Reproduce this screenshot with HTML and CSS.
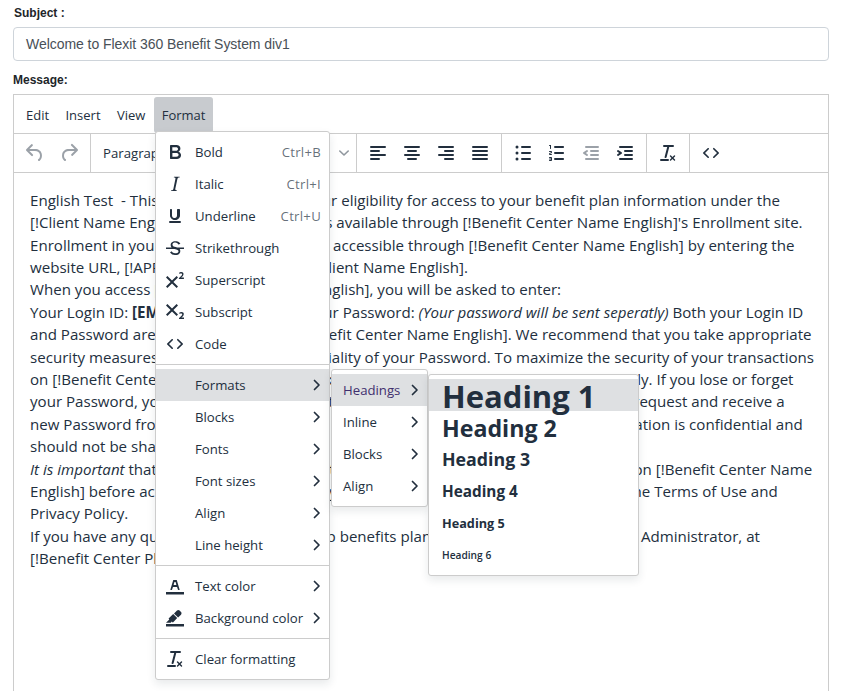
FILE: index.html
```html
<!DOCTYPE html>
<html lang="en">
<head>
<meta charset="utf-8">
<title>Message editor</title>
<link rel="stylesheet" href="styles.css">
</head>
<body>
<svg class="sprite" xmlns="http://www.w3.org/2000/svg">
  <symbol id="i-undo" viewBox="0 0 24 24"><path d="M6.4 8H12c3.7 0 6.2 2 6.8 5.1.6 2.7-.4 5.6-2.3 6.8a1 1 0 0 1-1-1.8c1.1-.6 1.8-2.7 1.4-4.6-.5-2.1-2.1-3.5-4.9-3.5H6.4l3.3 3.3a1 1 0 1 1-1.4 1.4l-5-5a1 1 0 0 1 0-1.4l5-5a1 1 0 0 1 1.4 1.4L6.4 8z"/></symbol>
  <symbol id="i-redo" viewBox="0 0 24 24"><path d="M17.6 10H12c-2.8 0-4.4 1.4-4.9 3.5-.4 2 .3 4 1.4 4.6a1 1 0 1 1-1 1.8c-2-1.2-2.9-4.1-2.3-6.8.6-3 3-5.1 6.8-5.1h5.6l-3.3-3.3a1 1 0 1 1 1.4-1.4l5 5a1 1 0 0 1 0 1.4l-5 5a1 1 0 0 1-1.4-1.4l3.3-3.3z"/></symbol>
  <symbol id="i-left" viewBox="0 0 24 24"><path d="M5 5h14a1 1 0 0 1 0 2H5a1 1 0 1 1 0-2zm0 4h8a1 1 0 0 1 0 2H5a1 1 0 0 1 0-2zm0 8h8a1 1 0 0 1 0 2H5a1 1 0 0 1 0-2zm0-4h14a1 1 0 0 1 0 2H5a1 1 0 0 1 0-2z"/></symbol>
  <symbol id="i-center" viewBox="0 0 24 24"><path d="M5 5h14a1 1 0 0 1 0 2H5a1 1 0 1 1 0-2zm3 4h8a1 1 0 0 1 0 2H8a1 1 0 1 1 0-2zm0 8h8a1 1 0 0 1 0 2H8a1 1 0 0 1 0-2zm-3-4h14a1 1 0 0 1 0 2H5a1 1 0 0 1 0-2z"/></symbol>
  <symbol id="i-right" viewBox="0 0 24 24"><path d="M5 5h14a1 1 0 0 1 0 2H5a1 1 0 1 1 0-2zm6 4h8a1 1 0 0 1 0 2h-8a1 1 0 0 1 0-2zm0 8h8a1 1 0 0 1 0 2h-8a1 1 0 0 1 0-2zm-6-4h14a1 1 0 0 1 0 2H5a1 1 0 0 1 0-2z"/></symbol>
  <symbol id="i-justify" viewBox="0 0 24 24"><path d="M5 5h14a1 1 0 0 1 0 2H5a1 1 0 1 1 0-2zm0 4h14a1 1 0 0 1 0 2H5a1 1 0 1 1 0-2zm0 4h14a1 1 0 0 1 0 2H5a1 1 0 0 1 0-2zm0 4h14a1 1 0 0 1 0 2H5a1 1 0 0 1 0-2z"/></symbol>
  <symbol id="i-bul" viewBox="0 0 24 24"><path d="M11 5h8a1 1 0 0 1 0 2h-8a1 1 0 0 1 0-2zm0 6h8a1 1 0 0 1 0 2h-8a1 1 0 0 1 0-2zm0 6h8a1 1 0 0 1 0 2h-8a1 1 0 0 1 0-2zM4.5 6a1.5 1.5 0 1 1 3 0 1.5 1.5 0 0 1-3 0zm0 6a1.5 1.5 0 1 1 3 0 1.5 1.5 0 0 1-3 0zm0 6a1.5 1.5 0 1 1 3 0 1.5 1.5 0 0 1-3 0z"/></symbol>
  <symbol id="i-num" viewBox="0 0 24 24"><path d="M10 17h8c.6 0 1 .4 1 1s-.4 1-1 1h-8a1 1 0 0 1 0-2zm0-6h8c.6 0 1 .4 1 1s-.4 1-1 1h-8a1 1 0 0 1 0-2zm0-6h8c.6 0 1 .4 1 1s-.4 1-1 1h-8a1 1 0 1 1 0-2zM6 4v3.5c0 .3-.2.5-.5.5a.5.5 0 0 1-.5-.5V5h-.5a.5.5 0 0 1 0-1H6zm-1 8.8l.2.2h1.3c.3 0 .5.2.5.5s-.2.5-.5.5H4.900a1 1 0 0 1-.9-1V13c0-.4.3-.8.6-1l1.200-.4.2-.3a.2.2 0 0 0-.2-.2H4.500a.5.5 0 0 1-.5-.5c0-.3.2-.5.5-.5h1.600c.5 0 .9.4.9 1v.1c0 .4-.3.8-.6 1l-1.200.4-.2.3zM7 17v2c0 .6-.4 1-1 1H4.500a.5.5 0 0 1 0-1h1.200c.2 0 .3-.1.3-.3 0-.2-.1-.3-.3-.3H4.400a.4.4 0 1 1 0-.8h1.300c.2 0 .3-.1.3-.3 0-.2-.1-.3-.3-.3H4.500a.5.5 0 1 1 0-1H6c.6 0 1 .4 1 1z"/></symbol>
  <symbol id="i-outdent" viewBox="0 0 24 24"><path d="M7 5h12a1 1 0 0 1 0 2H7a1 1 0 1 1 0-2zm5 4h7a1 1 0 0 1 0 2h-7a1 1 0 0 1 0-2zm0 4h7a1 1 0 0 1 0 2h-7a1 1 0 0 1 0-2zm-5 4h12a1 1 0 0 1 0 2H7a1 1 0 0 1 0-2zm1.600-3.800a1 1 0 0 1-1.200 1.600l-3-2a1 1 0 0 1 0-1.600l3-2a1 1 0 0 1 1.200 1.600L6.800 12l1.800 1.200z"/></symbol>
  <symbol id="i-indent" viewBox="0 0 24 24"><path d="M7 5h12a1 1 0 0 1 0 2H7a1 1 0 1 1 0-2zm5 4h7a1 1 0 0 1 0 2h-7a1 1 0 0 1 0-2zm0 4h7a1 1 0 0 1 0 2h-7a1 1 0 0 1 0-2zm-5 4h12a1 1 0 0 1 0 2H7a1 1 0 0 1 0-2zm-2.600-3.800L6.200 12l-1.800-1.200a1 1 0 0 1 1.200-1.600l3 2a1 1 0 0 1 0 1.600l-3 2a1 1 0 1 1-1.200-1.600z"/></symbol>
  <symbol id="i-clear" viewBox="0 0 24 24"><path d="M13.200 6a1 1 0 0 1 0 .2l-2.600 10a1 1 0 0 1-1 .8h-.2a.8.8 0 0 1-.8-1l2.600-10H8a1 1 0 1 1 0-2h9a1 1 0 0 1 0 2h-3.800zM5 18h7a1 1 0 0 1 0 2H5a1 1 0 0 1 0-2zm13 1.500L16.500 18 15 19.500a.7.7 0 0 1-1-1l1.500-1.500-1.500-1.500a.7.7 0 0 1 1-1l1.500 1.500 1.500-1.500a.7.7 0 0 1 1 1L17.500 17l1.500 1.500a.7.7 0 0 1-1 1z"/></symbol>
  <symbol id="i-code" viewBox="0 0 24 24"><path d="M9.800 15.700c.3.3.3.8 0 1-.3.4-.9.4-1.200 0l-4.400-4.100a.8.8 0 0 1 0-1.200l4.400-4.200c.3-.3.9-.3 1.200 0 .3.3.3.8 0 1.100L6 12l3.800 3.700zM14.200 15.700c-.3.3-.3.8 0 1 .4.4.9.4 1.200 0l4.400-4.100c.3-.3.3-.9 0-1.200l-4.400-4.200a.8.8 0 0 0-1.200 0c-.3.3-.3.8 0 1.100L18 12l-3.800 3.700z"/></symbol>
  <symbol id="i-bold" viewBox="0 0 24 24"><path d="M7.800 19c-.3 0-.5 0-.6-.2l-.2-.5V5.700c0-.2 0-.4.2-.5l.6-.2h5c1.500 0 2.700.3 3.500 1 .7.6 1.100 1.400 1.100 2.500a3 3 0 0 1-.6 1.900c-.4.6-1 1-1.600 1.200.4.1.9.3 1.300.6s.8.7 1 1.200c.4.4.5 1 .5 1.600 0 1.300-.4 2.300-1.300 3-.8.7-2.100 1-3.800 1H7.800zm5-8.300c.6 0 1.200-.1 1.600-.5.4-.3.6-.7.6-1.300 0-1.100-.8-1.700-2.300-1.700H9.300v3.500h3.500zm.5 6c.7 0 1.300-.1 1.700-.4.4-.4.6-.9.6-1.500s-.2-1-.7-1.400c-.4-.3-1-.4-2-.4H9.400v3.800h3.900z"/></symbol>
  <symbol id="i-italic" viewBox="0 0 24 24"><path d="M16.700 4.700l-.1.9h-.3c-.6 0-1 0-1.400.3-.3.3-.4.6-.5 1.100l-2.100 9.800v.6c0 .5.4.8 1.400.8h.2l-.2.8H8l.2-.8h.2c1.100 0 1.800-.5 2-1.500l2-9.800.1-.5c0-.6-.4-.8-1.400-.8h-.3l.2-.9h5.800z"/></symbol>
  <symbol id="i-underline" viewBox="0 0 24 24"><path d="M16 5c.6 0 1 .4 1 1v5.500a4 4 0 0 1-.4 1.800l-.2.3a4 4 0 0 1-3 2.400h-2.800a4 4 0 0 1-3-2.400l-.2-.3a4 4 0 0 1-.4-1.800V6c0-.6.4-1 1-1s1 .4 1 1v5.500c0 .3 0 .6.2.9a2.400 2.400 0 0 0 2.800 1.600c1.100-.2 2-1.200 2-2.500V6c0-.6.4-1 1-1zM7 17h10a1 1 0 0 1 0 2H7a1 1 0 0 1 0-2z"/></symbol>
  <symbol id="i-strike" viewBox="0 0 24 24"><path d="M15.600 8.500c-.5-.7-1-1.100-1.300-1.300-.6-.4-1.300-.6-2-.6-2.700 0-2.800 1.700-2.800 2.100 0 1.600 1.800 2 3.200 2.300 4.400.9 4.600 2.800 4.600 3.900 0 1.400-.7 4.100-5 4.100A6.200 6.200 0 0 1 7 16.400l1.500-1.100c.4.6 1.600 2 3.700 2 1.600 0 2.500-.4 3-1 .3-.4.3-.7.3-1 0-.8-.5-1.500-3-2-2.500-.6-4.800-1.200-4.800-4.200 0-1.300.4-3.900 4.800-3.900 1.600 0 2.700.5 3.200.8.5.3 1.300 1 1.700 1.500l-1.800 1.200zM3 11.500h18v1.500H3z"/></symbol>
  <symbol id="i-sup" viewBox="0 0 24 24"><path d="M15 9.400L10.400 14l4.600 4.600-1.400 1.400L9 15.400 4.400 20 3 18.600 7.600 14 3 9.400 4.400 8 9 12.600 13.600 8 15 9.400zm5.900 1.600h-5v-1l1-.8 1.700-1.600c.3-.4.5-.8.5-1.200 0-.3 0-.5-.2-.7-.2-.2-.5-.3-.9-.3l-.8.2-.7.4-.4-1.200c.2-.2.5-.4 1-.5.3-.2.8-.2 1.200-.2.7 0 1.200.2 1.600.5.4.4.6.9.6 1.500s-.2 1.100-.5 1.600a8 8 0 0 1-1.300 1.300l-.6.6h2.800V11z"/></symbol>
  <symbol id="i-sub" viewBox="0 0 24 24"><path d="M10.400 10l4.600 4.600-1.400 1.400L9 11.400 4.400 16 3 14.600 7.600 10 3 5.400 4.400 4 9 8.600 13.600 4 15 5.400 10.400 10zM21 19h-5v-1l1-.8 1.700-1.600c.3-.4.5-.8.5-1.200 0-.3 0-.6-.2-.7-.2-.2-.5-.3-.9-.3a2 2 0 0 0-.8.2l-.7.3-.4-1.100 1-.6 1.200-.2c.8 0 1.400.2 1.800.6.4.4.6.9.6 1.500s-.2 1.100-.5 1.600a8 8 0 0 1-1.300 1.300l-.6.6h2.600V19z"/></symbol>
  <symbol id="i-color" viewBox="0 0 24 24"><path d="M3 18h18v2.500H3z"/><path d="M8.700 16h-.8a.5.5 0 0 1-.5-.6l2.700-9c.1-.3.3-.4.5-.4h2.800c.2 0 .4.1.5.4l2.700 9a.5.5 0 0 1-.5.6h-.8a.5.5 0 0 1-.4-.4l-.7-2.200c0-.3-.3-.4-.5-.4h-3.400c-.2 0-.4.1-.5.4l-.7 2.200c0 .3-.2.4-.4.4zm2.600-7.600l-.6 2a.5.5 0 0 0 .5.6h1.600a.5.5 0 0 0 .5-.6l-.6-2c0-.3-.3-.4-.5-.4h-.4c-.2 0-.4.1-.5.4z"/></symbol>
  <symbol id="i-bg" viewBox="0 0 24 24"><path d="M3 18h18v2.500H3z"/><path d="M7.700 16.700H3l3.300-3.300-.7-.8L10.200 8l4 4.100-4 4.200c-.2.2-.6.2-.8 0l-.6-.7-1.100 1.100zm5-7.500L11 7.400l3-2.900a2 2 0 0 1 2.600 0L18 6c.7.7.7 2 0 2.700l-2.900 2.900-1.800-1.800-.5-.6z"/></symbol>
  <symbol id="i-chev" viewBox="0 0 16 16"><path d="M5.500 3.500l4.500 4.500-4.500 4.500" fill="none" stroke="currentColor" stroke-width="1.700" stroke-linecap="round" stroke-linejoin="round"/></symbol>
  <symbol id="i-down" viewBox="0 0 10 10"><path d="M.8 3l4.200 4 4.200-4" fill="none" stroke="currentColor" stroke-width="1.600" stroke-linecap="round" stroke-linejoin="round"/></symbol>
</svg>

<main class="page">
  <label class="field-label subject-label">Subject :</label>
  <div class="subject-input">Welcome to Flexit 360 Benefit System div1</div>
  <label class="field-label message-label">Message:</label>

  <section class="editor">
    <nav class="menubar">
      <span class="menu-btn">Edit</span>
      <span class="menu-btn">Insert</span>
      <span class="menu-btn">View</span>
      <span class="menu-btn is-open">Format</span>
    </nav>
    <div class="toolbar">
      <div class="tb-group">
        <span class="tb-btn is-off"><svg class="ic"><use href="#i-undo"/></svg></span>
        <span class="tb-btn is-off"><svg class="ic"><use href="#i-redo"/></svg></span>
      </div>
      <div class="tb-group tb-select">
        <span class="select-label">Paragraph</span>
        <svg class="select-chev"><use href="#i-down"/></svg>
      </div>
      <div class="tb-group">
        <span class="tb-btn"><svg class="ic"><use href="#i-left"/></svg></span>
        <span class="tb-btn"><svg class="ic"><use href="#i-center"/></svg></span>
        <span class="tb-btn"><svg class="ic"><use href="#i-right"/></svg></span>
        <span class="tb-btn"><svg class="ic"><use href="#i-justify"/></svg></span>
      </div>
      <div class="tb-group">
        <span class="tb-btn"><svg class="ic"><use href="#i-bul"/></svg></span>
        <span class="tb-btn"><svg class="ic"><use href="#i-num"/></svg></span>
        <span class="tb-btn is-off"><svg class="ic"><use href="#i-outdent"/></svg></span>
        <span class="tb-btn"><svg class="ic"><use href="#i-indent"/></svg></span>
      </div>
      <div class="tb-group">
        <span class="tb-btn"><svg class="ic"><use href="#i-clear"/></svg></span>
      </div>
      <div class="tb-group tb-last">
        <span class="tb-btn"><svg class="ic"><use href="#i-code"/></svg></span>
      </div>
    </div>
    <div class="content">
      English Test&nbsp; - This notice is to&nbsp; confirm your eligibility for access to your benefit plan information under the<br>
      [!Client Name English] benefit plan which is available through [!Benefit Center Name English]'s Enrollment site.<br>
      Enrollment in your benefits plan website is accessible through [!Benefit Center Name English] by entering the<br>
      website URL, [!APPLICATION URL], plus&nbsp; [!Client Name English].<br>
      When you access [!Benefit Center Name English], you will be asked to enter:<br>
      Your Login ID: <strong>[EMPLOYEE ID]</strong> and add your Password: <em>(Your password will be sent seperatly)</em> Both your Login ID<br>
      and Password are required to access [!Benefit Center Name English]. We recommend that you take appropriate<br>
      security measures to defend the confidentiality of your Password. To maximize the security of your transactions<br>
      on [!Benefit Center Name English], please keep your Password secure and use it secretly. If you lose or forget<br>
      your Password, you can contact the Benefit Center at any time in order to send a new request and receive a<br>
      new Password from the site. Your Login ID and Password are personal and this information is confidential and<br>
      should not be shared with anyone.<br>
      <em>It is important</em> that you do read and understand all of the plan details and information on [!Benefit Center Name<br>
      English] before accessing the site and that you have carefully read and agree to all of the Terms of Use and<br>
      Privacy Policy.<br>
      If you have any questions about your group benefits plan, please do&nbsp; contact your Plan Administrator, at<br>
      [!Benefit Center Phone].
    </div>
  </section>
</main>

<div class="menu menu-format">
  <div class="menu-group">
    <div class="item"><svg class="ic"><use href="#i-bold"/></svg><span class="item-text">Bold</span><span class="shortcut">Ctrl+B</span></div>
    <div class="item"><svg class="ic"><use href="#i-italic"/></svg><span class="item-text">Italic</span><span class="shortcut">Ctrl+I</span></div>
    <div class="item"><svg class="ic"><use href="#i-underline"/></svg><span class="item-text">Underline</span><span class="shortcut">Ctrl+U</span></div>
    <div class="item"><svg class="ic"><use href="#i-strike"/></svg><span class="item-text">Strikethrough</span></div>
    <div class="item"><svg class="ic"><use href="#i-sup"/></svg><span class="item-text">Superscript</span></div>
    <div class="item"><svg class="ic"><use href="#i-sub"/></svg><span class="item-text">Subscript</span></div>
    <div class="item"><svg class="ic"><use href="#i-code"/></svg><span class="item-text">Code</span></div>
  </div>
  <div class="menu-group">
    <div class="item is-active"><span class="ic-gap"></span><span class="item-text">Formats</span><svg class="chev"><use href="#i-chev"/></svg></div>
    <div class="item"><span class="ic-gap"></span><span class="item-text">Blocks</span><svg class="chev"><use href="#i-chev"/></svg></div>
    <div class="item"><span class="ic-gap"></span><span class="item-text">Fonts</span><svg class="chev"><use href="#i-chev"/></svg></div>
    <div class="item"><span class="ic-gap"></span><span class="item-text">Font sizes</span><svg class="chev"><use href="#i-chev"/></svg></div>
    <div class="item"><span class="ic-gap"></span><span class="item-text">Align</span><svg class="chev"><use href="#i-chev"/></svg></div>
    <div class="item"><span class="ic-gap"></span><span class="item-text">Line height</span><svg class="chev"><use href="#i-chev"/></svg></div>
  </div>
  <div class="menu-group">
    <div class="item"><svg class="ic"><use href="#i-color"/></svg><span class="item-text">Text color</span><svg class="chev"><use href="#i-chev"/></svg></div>
    <div class="item"><svg class="ic"><use href="#i-bg"/></svg><span class="item-text">Background color</span><svg class="chev"><use href="#i-chev"/></svg></div>
  </div>
  <div class="menu-group">
    <div class="item"><svg class="ic"><use href="#i-clear"/></svg><span class="item-text">Clear formatting</span></div>
  </div>
</div>

<div class="menu menu-formats">
  <div class="menu-group">
    <div class="item is-active"><span class="item-text sub-head">Headings</span><svg class="chev"><use href="#i-chev"/></svg></div>
    <div class="item"><span class="item-text">Inline</span><svg class="chev"><use href="#i-chev"/></svg></div>
    <div class="item"><span class="item-text">Blocks</span><svg class="chev"><use href="#i-chev"/></svg></div>
    <div class="item"><span class="item-text">Align</span><svg class="chev"><use href="#i-chev"/></svg></div>
  </div>
</div>

<div class="menu menu-headings">
  <div class="menu-group">
    <div class="item is-active"><span class="h h1">Heading 1</span></div>
    <div class="item"><span class="h h2">Heading 2</span></div>
    <div class="item"><span class="h h3">Heading 3</span></div>
    <div class="item"><span class="h h4">Heading 4</span></div>
    <div class="item"><span class="h h5">Heading 5</span></div>
    <div class="item"><span class="h h6">Heading 6</span></div>
  </div>
</div>
</body>
</html>
```
FILE: styles.css
```css
html, body {
  margin: 0;
  padding: 0;
  height: 691px;
  overflow: hidden;
  background: #fff;
}
.sprite {
  position: absolute;
  width: 0;
  height: 0;
}
.page {
  padding: 0 13px;
  display: flex;
  flex-direction: column;
}
.field-label {
  font: bold 12px/14px "Liberation Sans", Arial, sans-serif;
  color: #212529;
}
.subject-label {
  padding: 6px 0 0 1px;
}
.subject-input {
  margin-top: 7px;
  height: 34px;
  box-sizing: border-box;
  border: 1px solid #ced4da;
  border-radius: 4px;
  padding: 0 12px;
  font: 14px/32px "Liberation Sans", Arial, sans-serif;
  letter-spacing: -.05px;
  color: #495057;
}
.message-label {
  margin-top: 12px;
}
.editor {
  margin-top: 7px;
  height: 640px;
  border: 1px solid #ccc;
  font-family: "Open Sans", sans-serif;
  color: #222f3e;
}
.menubar {
  display: flex;
  gap: .4px;
  height: 39px;
  box-sizing: border-box;
  padding: 2px 0 0 4px;
  border-bottom: 1px solid #ccc;
}
.menu-btn {
  height: 36px;
  padding: 0 8px;
  font-size: 13px;
  line-height: 36px;
  border-radius: 3px;
}
.menu-btn.is-open {
  background: #c8cbcf;
}
.toolbar {
  display: flex;
  height: 39px;
  box-sizing: border-box;
  border-bottom: 1px solid #ccc;
}
.tb-group {
  display: flex;
  align-items: center;
  padding: 0 4px;
  border-right: 1px solid #ccc;
}
.tb-last {
  border-right: 0;
}
.tb-select {
  width: 253px;
  padding: 0 0 0 12px;
  box-sizing: content-box;
  justify-content: space-between;
}
.select-label {
  font-size: 13.200px;
}
.select-chev {
  width: 10px;
  height: 10px;
  margin-right: 7px;
  color: rgba(34, 47, 62, .5);
}
.tb-btn {
  width: 34px;
  height: 34px;
  display: flex;
  align-items: center;
  justify-content: center;
}
.ic {
  width: 24px;
  height: 24px;
  flex: none;
  fill: #222f3e;
}
.is-off .ic {
  fill: rgba(34, 47, 62, .45);
}
.content {
  padding: 15.700px 16px 0;
  font-size: 15.100px;
  line-height: 22.400px;
  color: #222f3e;
  white-space: nowrap;
}
.menu {
  position: absolute;
  box-sizing: border-box;
  background: #fff;
  border: 1px solid #ccc;
  border-radius: 3px;
  box-shadow: 0 4px 8px rgba(34, 47, 62, .1);
  font-family: "Open Sans", sans-serif;
  color: #222f3e;
}
.menu-format {
  left: 155px;
  top: 131px;
  width: 175px;
}
.menu-formats {
  left: 331px;
  top: 369px;
  width: 97px;
}
.menu-headings {
  left: 428px;
  top: 374px;
  width: 211px;
}
.menu-group {
  padding: 4px 0;
  border-bottom: 1px solid #ccc;
}
.menu-group:last-child {
  border-bottom: 0;
}
.item {
  display: flex;
  align-items: center;
  height: 32px;
  box-sizing: border-box;
  padding: 0 7px;
}
.menu-formats .item {
  padding: 0 7px 0 11px;
}
.menu-headings .item {
  padding: 0 13px;
}
.item.is-active {
  background: #dee0e2;
}
.ic-gap {
  width: 24px;
  flex: none;
}
.item-text {
  margin-left: 8px;
  font-size: 13.200px;
  flex: 1;
  white-space: nowrap;
}
.menu-formats .item-text {
  margin-left: 0;
}
.sub-head {
  color: #3f2f6e;
}
.shortcut {
  font-size: 13.200px;
  letter-spacing: .25px;
  margin-right: 1px;
  color: rgba(34, 47, 62, .7);
}
.chev {
  width: 16px;
  height: 16px;
  flex: none;
  margin-right: -3px;
  color: #222f3e;
}
.h {
  font-weight: 700;
  white-space: nowrap;
}
.h1 { font-size: 31px; padding-top: 2px; }
.h2 { font-size: 23.200px; padding-top: 2px; }
.h3 { font-size: 17.800px; }
.h4 { font-size: 15.300px; }
.h5 { font-size: 12.700px; }
.h6 { font-size: 10.200px; font-weight: 600; }
```
